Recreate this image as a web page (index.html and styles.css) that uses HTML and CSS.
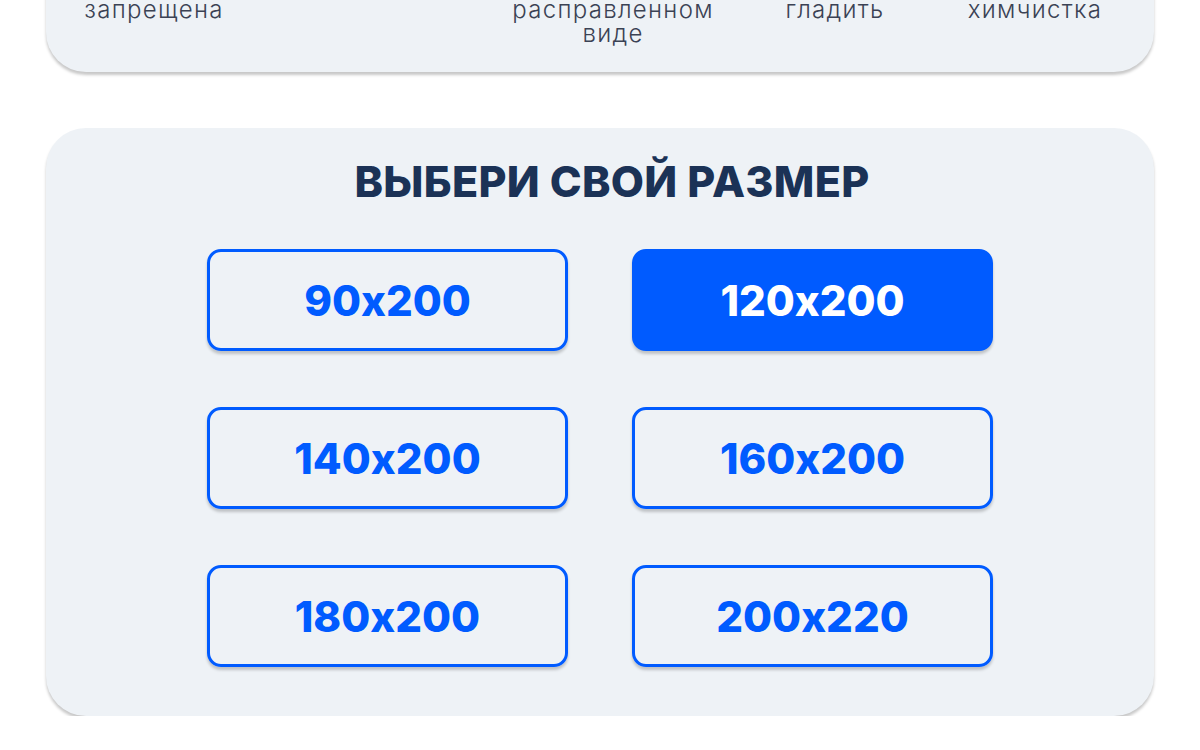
FILE: index.html
```html
<!DOCTYPE html>
<html lang="ru">
<head>
    <meta charset="UTF-8">
    <meta name="viewport" content="width=device-width, initial-scale=1.0">
    <title>Выбери свой размер</title>
    <link rel="stylesheet" href="styles.css">
</head>
<body>
    <main class="page">
        <section class="card care">
            <div class="care-row">
                <div class="care-item">запрещена</div>
                <div class="care-item"></div>
                <div class="care-item">расправленном виде</div>
                <div class="care-item">гладить</div>
                <div class="care-item">химчистка</div>
            </div>
        </section>

        <section class="card sizes">
            <h2 class="sizes-title">Выбери свой размер</h2>
            <div class="size-grid">
                <button class="size-btn">90x200</button>
                <button class="size-btn active">120x200</button>
                <button class="size-btn">140x200</button>
                <button class="size-btn">160x200</button>
                <button class="size-btn">180x200</button>
                <button class="size-btn">200x220</button>
            </div>
        </section>
    </main>
</body>
</html>
```

FILE: styles.css
```css
body{
    margin: 0;
    background-color: #ffffff;
    font-family: Inter, "Noto Sans", sans-serif;
}

.page{
    padding: 0 46px;
    display: flex;
    flex-direction: column;
    gap: 56px;
}

.card{
    background-color: #eef2f6;
    border-radius: 40px;
    box-shadow: 0 3px 3px rgba(0, 0, 0, 0.22);
}

/* bottom of the care block, scrolled out of view */
.care{
    margin-top: -38px;
    border-radius: 0 0 40px 40px;
    padding: 36px 0 0;
    height: 74px;
}

.care-row{
    display: grid;
    grid-template-columns: 216px 230px 242px 202px 198px;
}

.care-item{
    text-align: center;
    font-size: 24px;
    font-weight: 300;
    line-height: 24px;
    letter-spacing: 1.3px;
    color: #3b4254;
    padding: 0 20px;
}

.sizes{
    padding: 26px 0 49px;
}

.sizes-title{
    margin: 0;
    padding-left: 24px;
    text-align: center;
    text-transform: uppercase;
    font-size: 43px;
    font-weight: 800;
    line-height: 54px;
    letter-spacing: 0.3px;
    color: #1b3256;
}

.size-grid{
    margin: 41px auto 0;
    width: 786px;
    display: grid;
    grid-template-columns: 361px 361px;
    column-gap: 64px;
    row-gap: 56px;
}

.size-btn{
    height: 102px;
    border: 3px solid #005bff;
    border-radius: 14px;
    background-color: transparent;
    box-shadow: 0 3px 3px rgba(0, 0, 0, 0.2);
    font-family: Inter, sans-serif;
    font-feature-settings: "calt" 0;
    font-size: 42px;
    font-weight: 800;
    color: #005bff;
    cursor: pointer;
}

.size-btn.active{
    background-color: #005bff;
    color: #ffffff;
}
```
